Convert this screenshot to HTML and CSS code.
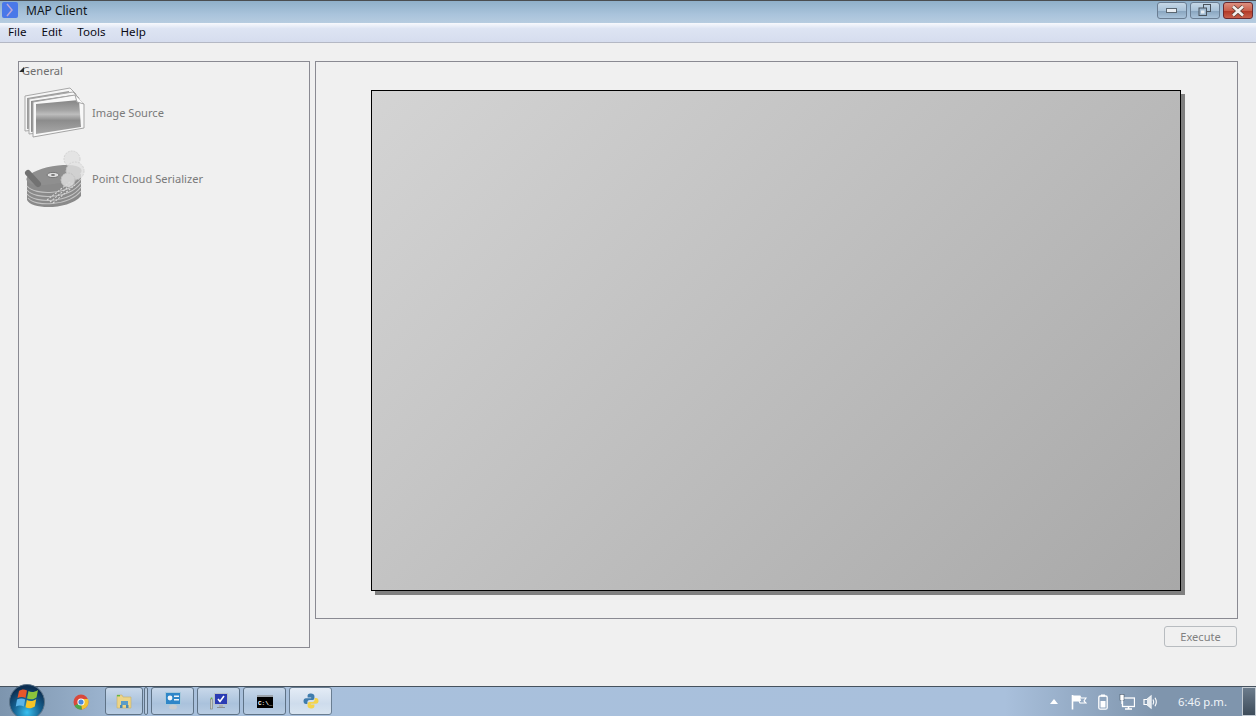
FILE: index.html
```html
<!DOCTYPE html>
<html>
<head>
    <title>MAP Client</title>
    <link rel="stylesheet" href="styles.css">
</head>
<body>
    <div class="titlebar">
        <svg class="app-icon" width="18" height="18" viewBox="0 0 18 18">
            <rect x="1" y="1" width="16" height="16" rx="2" fill="#4a78e8"/>
            <path d="M6 3 L11 9 L6 15" fill="none" stroke="#b9a6d8" stroke-width="1.5"/>
        </svg>
        <span class="title-text">MAP Client</span>
        <div class="win-buttons">
            <div class="win-btn">
                <svg width="12" height="6" viewBox="0 0 12 6"><rect x="0.5" y="0.5" width="10" height="4" fill="#e8edf2" stroke="#5a6670"/></svg>
            </div>
            <div class="win-btn">
                <svg width="14" height="13" viewBox="0 0 14 13">
                    <rect x="5.5" y="0.5" width="7" height="7" fill="none" stroke="#4a545e"/>
                    <rect x="1" y="4" width="7.5" height="7.5" fill="#9fb9d0" stroke="#4a545e"/>
                    <rect x="3" y="6.5" width="3.5" height="3" fill="#e8edf2"/>
                </svg>
            </div>
            <div class="win-btn win-close">
                <svg width="14" height="12" viewBox="0 0 14 12"><path d="M2 1.5 L12 10.5 M12 1.5 L2 10.5" stroke="#5a4038" stroke-width="4.2"/><path d="M2 1.5 L12 10.5 M12 1.5 L2 10.5" stroke="#f4f0ee" stroke-width="2.6"/></svg>
            </div>
        </div>
    </div>

    <div class="menubar">
        <span class="menu-item">File</span>
        <span class="menu-item">Edit</span>
        <span class="menu-item">Tools</span>
        <span class="menu-item">Help</span>
    </div>

    <div class="client">
        <div class="palette">
            <div class="group-label"><span class="arrow"></span>General</div>
            <div class="step step-image">
                <svg width="64" height="52" viewBox="0 0 64 52">
                    <defs>
                        <linearGradient id="photo" x1="0" y1="0" x2="0" y2="1">
                            <stop offset="0" stop-color="#858585"/>
                            <stop offset="0.3" stop-color="#a4a4a4"/>
                            <stop offset="0.42" stop-color="#bdbdbd"/>
                            <stop offset="0.6" stop-color="#8c8c8c"/>
                            <stop offset="1" stop-color="#a8a8a8"/>
                        </linearGradient>
                    </defs>
                    <path d="M2 10 L47 2 L53 8 L53 40 L2 45 Z" fill="#f6f6f6" stroke="#a8a8a8"/>
                    <path d="M4 12 L46 5 L50 40 L4 43 Z" fill="#9c9c9c"/>
                    <path d="M6 13 L50 6 L56 12 L56 42 L6 48 Z" fill="#f6f6f6" stroke="#a8a8a8"/>
                    <path d="M8 15 L50 9 L54 40 L8 46 Z" fill="#8e8e8e"/>
                    <path d="M10 16 L52 9 L61 18 L61 42 L10 51 Z" fill="#f8f8f8" stroke="#a4a4a4"/>
                    <path d="M13 18 L56 14 L58 41 L13 48 Z" fill="url(#photo)"/>
                    <path d="M52 9 L54 16 L61 18" fill="#fff" stroke="#a4a4a4"/>
                </svg>
                <span class="step-name">Image Source</span>
            </div>
            <div class="step step-cloud">
                <svg width="66" height="60" viewBox="0 0 66 60">
                    <path d="M4 31 V50 C8 60 46 60 58 46 V24 Z" fill="#8a8a8a"/>
                    <g fill="none" stroke="#c4c4c4" stroke-width="1.2">
                        <path d="M4 36 C12 46 46 45 58 29"/>
                        <path d="M4 40 C12 50 46 49 58 33"/>
                        <path d="M4 44 C12 54 46 53 58 37"/>
                        <path d="M5 48 C12 57 46 56 58 41"/>
                    </g>
                    <ellipse cx="31" cy="25" rx="28" ry="9" fill="#8f8f8f" transform="rotate(-10 31 25)"/>
                    <ellipse cx="30" cy="25" rx="6" ry="2.6" fill="#dedede" stroke="#777"/>
                    <ellipse cx="30" cy="25" rx="2" ry="1" fill="#777"/>
                    <path d="M5 23 L15 34" stroke="#727272" stroke-width="6" stroke-linecap="round"/>
                    <g fill="#e2e2e2" stroke="#cdcdcd" stroke-dasharray="2 1" opacity="0.8">
                        <circle cx="49" cy="9" r="8"/>
                        <circle cx="52" cy="21" r="9"/>
                        <circle cx="45" cy="30" r="7"/>
                    </g>
                    <g stroke="#dadada" stroke-width="1.1" stroke-dasharray="2 1.4">
                        <path d="M24 50 L47 32"/>
                        <path d="M27 52 L50 33"/>
                        <path d="M30 53 L52 35"/>
                    </g>
                </svg>
                <span class="step-name">Point Cloud Serializer</span>
            </div>
        </div>

        <div class="workspace">
            <div class="view-frame">
                <div class="scene"></div>
            </div>
            <div class="actions">
                <button class="exec-btn" disabled>Execute</button>
            </div>
        </div>
    </div>

    <div class="taskbar">
        <div class="start-orb">
            <svg width="36" height="36" viewBox="0 0 36 36">
                <defs>
                    <radialGradient id="orb" cx="0.5" cy="0.8" r="0.7">
                        <stop offset="0" stop-color="#38c0f0"/>
                        <stop offset="0.55" stop-color="#15608f"/>
                        <stop offset="1" stop-color="#0c2f52"/>
                    </radialGradient>
                </defs>
                <circle cx="18" cy="18" r="17.5" fill="url(#orb)" stroke="#5d7488"/>
                <g transform="translate(1 -3)">
                    <path d="M9 10 C12 8 14 8 17 9.5 L15.5 17 C13 15.5 10.5 15.5 7.5 17 Z" fill="#e8572a"/>
                    <path d="M18.5 10 C21 11.5 24 11.5 28 9 L26.5 16.5 C23 19 20 18.5 17 17.5 Z" fill="#8cc43c"/>
                    <path d="M7 18.5 C10 17 13 17 15.2 18.5 L13.8 25.5 C11 24 9 24 5.8 25.5 Z" fill="#5cb4e8"/>
                    <path d="M16.8 19 C20 20.5 23 20.5 26.2 18 L24.8 25.5 C21 28 18.5 27.5 15.5 26.2 Z" fill="#f8c426"/>
                </g>
            </svg>
        </div>
        <div class="task-slot">
            <svg width="16" height="16" viewBox="0 0 16 16">
                <circle cx="8" cy="8" r="7.5" fill="#d9483b"/>
                <path d="M8 8 L1.5 11.8 A7.5 7.5 0 0 0 9 15.4 Z" fill="#4aa84a"/>
                <path d="M8 8 L9 15.4 A7.5 7.5 0 0 0 14.9 5 L8 5 Z" fill="#f3c431"/>
                <circle cx="8" cy="8" r="3.6" fill="#fff"/>
                <circle cx="8" cy="8" r="2.6" fill="#4a88dc"/>
            </svg>
        </div>
        <div class="task-btn task-folder">
            <svg width="18" height="17" viewBox="0 0 18 17">
                <path d="M2 2 H7 L8 4 H16 V15 H2 Z" fill="#ecd488" stroke="#c8ae68" stroke-width="0.6"/>
                <rect x="2" y="2" width="3" height="1.4" fill="#5cb84a"/>
                <rect x="6" y="8" width="7" height="4" fill="#5a9cc8"/>
                <rect x="5" y="12" width="2.5" height="3" fill="#4a88b4"/>
                <rect x="11" y="12" width="2.5" height="3" fill="#4a88b4"/>
            </svg>
        </div>
        <div class="task-sep"></div>
        <div class="task-btn">
            <svg width="16" height="18" viewBox="0 0 16 18">
                <rect x="0.5" y="0.5" width="15" height="12" fill="#2f86c8" stroke="#a6c8dc"/>
                <circle cx="5" cy="6" r="2.4" fill="#f0f4f8"/>
                <rect x="9" y="3.5" width="5" height="1.5" fill="#f0f4f8"/>
                <rect x="9" y="7" width="5" height="1.5" fill="#f0f4f8"/>
                <ellipse cx="8" cy="15" rx="4" ry="2.5" fill="#c8ccd0"/>
            </svg>
        </div>
        <div class="task-btn">
            <svg width="18" height="17" viewBox="0 0 18 17">
                <rect x="0.5" y="6" width="2" height="10" fill="#c8ccc4" stroke="#7a7f78" stroke-width="0.6"/>
                <rect x="0.8" y="4.5" width="1.5" height="1.5" fill="#6cb44a"/>
                <rect x="4.5" y="0.5" width="13" height="11" fill="#2a3cb4" stroke="#b8c0c8"/>
                <path d="M8 6 L10 8.5 L14 3" fill="none" stroke="#fff" stroke-width="1.6"/>
                <rect x="9" y="12" width="4" height="2" fill="#aab0b4"/>
                <rect x="7" y="14" width="8" height="1" fill="#8a9094"/>
            </svg>
        </div>
        <div class="task-btn">
            <svg width="16" height="13" viewBox="0 0 16 13">
                <rect width="16" height="13" fill="#000"/>
                <rect width="16" height="2" fill="#9aa2aa"/>
                <text x="1" y="10" class="cmd-text">C:\_</text>
            </svg>
        </div>
        <div class="task-btn task-active">
            <svg width="16" height="16" viewBox="0 0 16 16">
                <path d="M8 0.5 C5 0.5 4.6 1.8 4.6 3 V4.6 H8.2 V5.2 H3 C1.4 5.2 0.5 6.4 0.5 8 C0.5 9.8 1.4 11 3 11 H4.4 V9.2 C4.4 7.8 5.4 7 6.8 7 H9.6 C10.8 7 11.4 6.2 11.4 5 V3 C11.4 1.4 10 0.5 8 0.5 Z" fill="#3f7cad"/>
                <path d="M8 15.5 C11 15.5 11.4 14.2 11.4 13 V11.4 H7.8 V10.8 H13 C14.6 10.8 15.5 9.6 15.5 8 C15.5 6.2 14.6 5 13 5 H11.6 V6.8 C11.6 8.2 10.6 9 9.2 9 H6.4 C5.2 9 4.6 9.8 4.6 11 V13 C4.6 14.6 6 15.5 8 15.5 Z" fill="#f4d44c"/>
            </svg>
        </div>

        <div class="tray">
            <svg class="tray-arrow" width="8" height="5" viewBox="0 0 8 5"><path d="M0 5 L4 0 L8 5 Z" fill="#fff"/></svg>
            <svg width="16" height="16" viewBox="0 0 16 16">
                <path d="M1.5 1 V15.5" stroke="#fff" stroke-width="1.6"/>
                <path d="M2 2 H9 L10 4 H15 L13 7 L15 9 H9 L8 7 H2 Z" fill="none" stroke="#fff" stroke-width="1.1"/>
                <path d="M2 2 H9 L10 7 H2 Z" fill="#fff"/>
            </svg>
            <svg class="tray-battery" width="10" height="16" viewBox="0 0 10 16">
                <rect x="3" y="0.5" width="4" height="2" fill="#fff"/>
                <rect x="0.8" y="2" width="8.4" height="13.2" rx="1.5" fill="none" stroke="#fff" stroke-width="1.3"/>
                <rect x="2.5" y="7" width="5" height="6.5" fill="#fff"/>
            </svg>
            <svg width="16" height="16" viewBox="0 0 16 16">
                <rect x="3.5" y="4" width="12" height="8.5" fill="none" stroke="#fff" stroke-width="1.3"/>
                <rect x="1" y="0.5" width="4" height="6" fill="#fff" stroke="#39485a" stroke-width="0.5"/>
                <path d="M3 6 V10" stroke="#fff" stroke-width="1.3"/>
                <path d="M6 15 H13 M9.5 12.5 V15" stroke="#fff" stroke-width="1.5"/>
            </svg>
            <svg width="16" height="16" viewBox="0 0 16 16">
                <path d="M1 5.5 H4 L8 2 V14 L4 10.5 H1 Z" fill="none" stroke="#fff" stroke-width="1.2"/>
                <path d="M4 5.5 L8 2 V14 L4 10.5 Z" fill="#e6ebf0"/>
                <path d="M10 5.5 Q11.5 8 10 10.5 M12 3.8 Q14.6 8 12 12.2" fill="none" stroke="#fff" stroke-width="1.1"/>
            </svg>
            <span class="clock">6:46 p.m.</span>
            <div class="show-desktop"></div>
        </div>
    </div>
</body>
</html>
```

FILE: styles.css
```css
html, body {
    margin: 0;
    padding: 0;
}
body {
    width: 1256px;
    height: 716px;
    overflow: hidden;
    display: flex;
    flex-direction: column;
    background-color: #f0f0f0;
    font-family: "Noto Sans", "Open Sans", sans-serif;
    font-size: 11.6px;
}

.titlebar {
    height: 22px;
    flex: none;
    display: flex;
    align-items: flex-start;
    border-top: 1px solid #4a4d50;
    background: linear-gradient(to bottom, #8fafc9, #a9c3db 60%, #b6cce0);
}
.app-icon {
    margin-left: 1px;
}
.title-text {
    margin-left: 7px;
    line-height: 19px;
    font-size: 12px;
    color: #10161c;
}
.win-buttons {
    margin-left: auto;
    margin-right: 3px;
    display: flex;
    gap: 3px;
    margin-top: 1px;
}
.win-btn {
    width: 28px;
    height: 15px;
    display: flex;
    align-items: center;
    justify-content: center;
    border: 1px solid #6a7d92;
    border-radius: 3px;
    background: linear-gradient(to bottom, #c5d7e6 0%, #a9c2d8 50%, #8aa6c0 55%, #a9c3da 100%);
}
.win-close {
    border-color: #6a2a30;
    background: linear-gradient(to bottom, #dc8f7f 0%, #c9604d 50%, #b33a28 55%, #c8604c 100%);
}

.menubar {
    height: 19px;
    flex: none;
    display: flex;
    align-items: flex-start;
    line-height: 17px;
    padding-left: 8px;
    gap: 15px;
    border-bottom: 1px solid #b4b8c4;
    background: linear-gradient(to bottom, #f7f9fd, #dde4f3 30%, #d6ddee);
    color: #0a0a14;
}

.client {
    flex: 1;
    display: flex;
    padding: 18px 18px 38px 18px;
    gap: 5px;
    min-height: 0;
}
.palette {
    width: 290px;
    flex: none;
    border: 1px solid #8a8a92;
    display: flex;
    flex-direction: column;
}
.group-label {
    height: 17px;
    margin-bottom: 1px;
    padding-left: 3px;
    display: flex;
    align-items: center;
    color: #6e6e6e;
    font-size: 11.1px;
    position: relative;
}
.arrow {
    position: absolute;
    left: 0;
    top: 5px;
    width: 0;
    height: 0;
    border-left: 5px solid transparent;
    border-bottom: 5px solid #2a2a2a;
}
.step {
    display: flex;
    align-items: center;
    color: #7a7a7a;
    font-size: 11.1px;
    padding-left: 4px;
}
.step-image {
    height: 52px;
    margin-top: 6px;
}
.step-image .step-name {
    margin-left: 5px;
}
.step-cloud {
    height: 60px;
    margin-top: 12px;
}
.step-cloud .step-name {
    margin-left: 3px;
    margin-top: -4px;
}

.workspace {
    flex: 1;
    display: flex;
    flex-direction: column;
    min-width: 0;
}
.view-frame {
    height: 558px;
    flex: none;
    box-sizing: border-box;
    border: 1px solid #8a8a92;
    padding: 28px 56px 27px 55px;
}
.scene {
    height: 100%;
    border: 1px solid #000;
    box-shadow: 4px 4px 0 #808080;
    background: linear-gradient(135deg, #d4d4d4, #a8a8a8);
    box-sizing: border-box;
}
.actions {
    display: flex;
    justify-content: flex-end;
    margin-top: 7px;
    padding-right: 1px;
}
.exec-btn {
    width: 73px;
    height: 21px;
    padding: 0;
    border: 1px solid #b8bcc0;
    border-radius: 3px;
    background: #f0f0f0;
    color: #808080;
    font-family: inherit;
    font-size: 11.1px;
}

.taskbar {
    height: 29px;
    flex: none;
    display: flex;
    align-items: flex-start;
    position: relative;
    border-top: 1px solid #46525e;
    background: linear-gradient(to right, #7d95ae, #a8c0dc 12%, #a9c0dc 80%, #7f95ad 92%);
}
.start-orb {
    position: absolute;
    left: 9px;
    top: -3px;
    width: 36px;
    height: 36px;
}
.task-slot {
    width: 47px;
    height: 29px;
    box-sizing: border-box;
    padding-right: 2px;
    margin-left: 58px;
    display: flex;
    align-items: center;
    justify-content: center;
}
.task-btn {
    width: 41px;
    height: 26px;
    margin-right: 3px;
    display: flex;
    align-items: center;
    justify-content: center;
    border: 1px solid #5e7286;
    border-radius: 3px;
    background: linear-gradient(to bottom, #c8d8ea, #aac2dc 60%, #b8cce2);
}
.task-folder {
    width: 36px;
    margin-right: 1px;
}
.task-sep {
    width: 2px;
    height: 26px;
    margin-right: 3px;
    border: 1px solid #5e7286;
    border-radius: 2px;
    background: #b4c8de;
}
.task-active {
    background: linear-gradient(to bottom, #e4ecf6, #cedcec 60%, #d8e4f0);
    border-color: #6a7e92;
}
.cmd-text {
    font-family: "Liberation Mono", monospace;
    font-size: 6px;
    font-weight: bold;
    fill: #fff;
}

.tray {
    margin-left: auto;
    height: 29px;
    display: flex;
    align-items: center;
    gap: 8px;
    color: #fff;
}
.tray-arrow {
    margin-right: 5px;
}
.tray-battery {
    margin: 0 3px;
}
.clock {
    margin-left: 11px;
    width: 64px;
    margin-right: -8px;
    font-size: 11.3px;
    color: #f0f4f8;
}
.show-desktop {
    width: 14px;
    height: 29px;
    border: 1px solid #c4ccd4;
    box-sizing: border-box;
    background: linear-gradient(to bottom, #6c7c8c, #3e4c5a);
}
```
